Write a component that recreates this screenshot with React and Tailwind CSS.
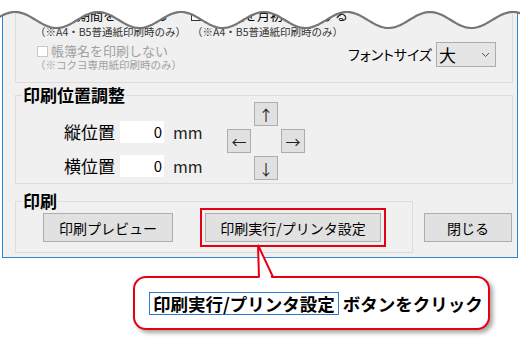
import React from "react";

function Wave() {
  const pts = [];
  for (let x = -4; x <= 524; x += 2) {
    const y = 20 - 8 * Math.cos((2 * Math.PI * (x - 15)) / 83);
    pts.push(`${x},${y.toFixed(2)}`);
  }
  const line = "M" + pts.join(" L");
  const fill = `M-4,-6 L${pts.join(" L")} L524,-6 Z`;
  return (
    <svg
      className="absolute left-0 top-0 pointer-events-none"
      width="520"
      height="40"
      viewBox="0 0 520 40"
    >
      <path d={fill} fill="#ffffff" />
      <path d={line} fill="none" stroke="#767676" strokeWidth="2.2" />
    </svg>
  );
}

function Box({ gray }) {
  return (
    <span
      className={
        gray
          ? "block w-[11px] h-[11px] border border-[#c8c8c8] bg-white"
          : "block w-[11px] h-[11px] border border-[#333333] bg-white"
      }
    />
  );
}

function ArrowBtn({ children }) {
  return (
    <div className="w-[24px] h-[24px] border border-[#adadad] bg-[#e1e1e1] flex items-center justify-center text-[15px] leading-none text-[#222]">
      {children}
    </div>
  );
}

export default function App() {
  return (
    <div className="relative w-[520px] h-[338px] bg-white overflow-hidden font-['Noto_Sans_CJK_JP','Noto_Sans',sans-serif] text-black">
      <div className="ml-[2px] w-[516px] border-x border-b border-[#2b88d8] bg-[#f0f0f0] pl-[12px] pr-[4px] pb-[4px]">
        {/* top group (partially hidden) */}
        <div className="h-[83px] border-x border-b border-[#dcdcdc] flex">
          <div className="ml-[19px] w-[158px] flex flex-col">
            <div className="mt-[8px] h-[14px] flex items-center">
              <span className="ml-[2px]">
                <Box />
              </span>
              <span className="ml-[3px] text-[13px] leading-[14px] whitespace-nowrap">
                印刷期間を印刷する
              </span>
            </div>
            <div className="mt-[4px] h-[12px] text-[10.5px] leading-[12px] text-[#333] whitespace-nowrap">
              （※A4・B5普通紙印刷時のみ）
            </div>
            <div className="mt-[6px] h-[14px] flex items-center">
              <span className="ml-[2px]">
                <Box gray />
              </span>
              <span className="ml-[3px] text-[13px] leading-[14px] text-[#a0a0a0] whitespace-nowrap">
                帳簿名を印刷しない
              </span>
            </div>
            <div className="mt-[1px] h-[12px] text-[10.5px] leading-[12px] text-[#a0a0a0] whitespace-nowrap">
              （※コクヨ専用紙印刷時のみ）
            </div>
          </div>
          <div className="flex flex-col">
            <div className="mt-[8px] h-[14px] flex items-center">
              <Box />
              <span className="ml-[3px] text-[13px] leading-[14px] whitespace-nowrap">
                繰越額を月初に印刷する
              </span>
            </div>
            <div className="mt-[4px] ml-[1px] h-[12px] text-[10.5px] leading-[12px] text-[#333] whitespace-nowrap">
              （※A4・B5普通紙印刷時のみ）
            </div>
          </div>
          <div className="ml-auto mr-[16px] mt-[42px] h-[25px] flex items-center">
            <span className="text-[14px] [font-feature-settings:'palt'] whitespace-nowrap">
              フォントサイズ
            </span>
            <div className="ml-[4px] w-[60px] h-[25px] border border-[#acacac] bg-[#e5e5e5] flex items-center">
              <span className="pl-[2px] text-[17px] leading-none">大</span>
              <svg className="ml-auto mr-[5px]" width="9" height="6" viewBox="0 0 9 6">
                <path d="M1 1 L4.5 4.5 L8 1" fill="none" stroke="#555" strokeWidth="1" />
              </svg>
            </div>
          </div>
        </div>

        {/* 印刷位置調整 */}
        <fieldset className="mt-[5px] w-[498px] border border-[#dcdcdc]">
          <legend className="ml-[6px] px-[1px] text-[17px] font-bold leading-[14px]">
            印刷位置調整
          </legend>
          <div className="flex">
            <div className="w-[211px] pl-[47px] pt-[19px] flex flex-col gap-[12px]">
              {["縦位置", "横位置"].map((l) => (
                <div key={l} className="flex items-center h-[22px]">
                  <span className="w-[52px] text-right text-[17px] leading-[22px] whitespace-nowrap">
                    {l}
                  </span>
                  <div className="ml-[5px] w-[44px] h-[22px] bg-white text-right pr-[2px] text-[15px] leading-[22px]">
                    0
                  </div>
                  <span className="ml-[9px] text-[16px] leading-[22px] text-[#222]">mm</span>
                </div>
              ))}
            </div>
            <div className="grid grid-cols-[24px_24px_24px] grid-rows-[24px_24px_24px] gap-[3px] pb-[3px]">
              <div />
              <ArrowBtn>↑</ArrowBtn>
              <div />
              <ArrowBtn>←</ArrowBtn>
              <div />
              <ArrowBtn>→</ArrowBtn>
              <div />
              <ArrowBtn>↓</ArrowBtn>
              <div />
            </div>
          </div>
        </fieldset>

        {/* 印刷 */}
        <div className="mt-[10px] flex items-start">
          <fieldset className="w-[398px] border border-[#dcdcdc] pb-[5px]">
            <legend className="ml-[6px] px-[1px] text-[17px] font-bold leading-[14px]">
              印刷
            </legend>
            <div className="flex items-center">
              <button className="ml-[27px] w-[130px] h-[29px] border border-[#adadad] bg-[#e1e1e1] text-[14px] leading-none text-black">
                印刷プレビュー
              </button>
              <div className="ml-[27px] border-2 border-[#e50012] p-[3px]">
                <button className="block w-[176px] h-[29px] border border-[#adadad] bg-[#e1e1e1] text-[14px] leading-none text-black whitespace-nowrap">
                  印刷実行/プリンタ設定
                </button>
              </div>
            </div>
          </fieldset>
          <button className="ml-[11px] mt-[19px] w-[88px] h-[29px] border border-[#adadad] bg-[#e1e1e1] text-[14px] leading-none text-black">
            閉じる
          </button>
        </div>
      </div>

      {/* callout */}
      <div className="relative mt-[18px] ml-[133px] w-[357px] h-[54px] border-2 border-[#e50012] rounded-[13px] bg-white shadow-[3px_3px_4px_rgba(0,0,0,0.35)] flex items-center pl-[14px]">
        <svg
          className="absolute left-[115px] top-[-36px] overflow-visible"
          width="30"
          height="38"
          viewBox="0 0 30 38"
        >
          <polygon points="8,3 9.6,37.5 22,37.5" fill="#ffffff" />
          <path d="M9 35 L8 3 L23 35" fill="none" stroke="#e50012" strokeWidth="2" />
        </svg>
        <span className="border border-[#2b7bd0] px-[3px] h-[23px] text-[17.5px] font-bold leading-[21px] whitespace-nowrap">
          印刷実行/プリンタ設定
        </span>
        <span className="ml-[4px] text-[17.5px] font-bold leading-[21px] whitespace-nowrap">
          ボタンをクリック
        </span>
      </div>

      <Wave />
    </div>
  );
}
